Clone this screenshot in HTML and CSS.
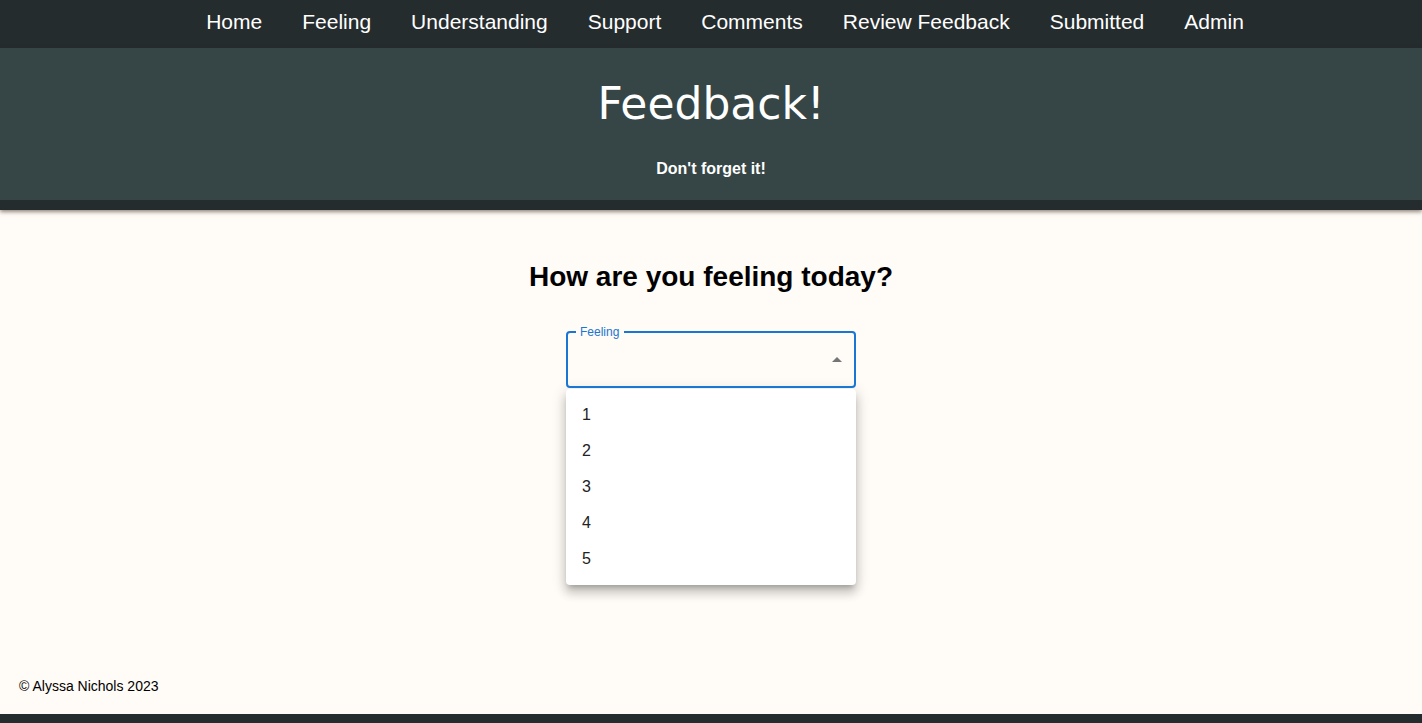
FILE: index.html
```html
<!DOCTYPE html>
<html lang="en">
<head>
<meta charset="utf-8">
<title>Feedback!</title>
<link rel="stylesheet" href="styles.css">
</head>
<body>
<div class="page">
  <nav class="nav">
    <a href="#">Home</a>
    <a href="#">Feeling</a>
    <a href="#">Understanding</a>
    <a href="#">Support</a>
    <a href="#">Comments</a>
    <a href="#">Review Feedback</a>
    <a href="#">Submitted</a>
    <a href="#">Admin</a>
  </nav>
  <header class="hero">
    <h1 class="hero-title">Feedback!</h1>
    <p class="hero-sub">Don't forget it!</p>
  </header>
  <main class="main">
    <h2 class="question">How are you feeling today?</h2>
    <div class="select-wrap">
      <fieldset class="select">
        <legend class="select-legend">Feeling</legend>
        <svg class="select-arrow" width="24" height="24" viewBox="0 0 24 24"><path d="M7 14l5-5 5 5z" fill="#757575"/></svg>
      </fieldset>
      <ul class="menu">
        <li class="menu-item">1</li>
        <li class="menu-item">2</li>
        <li class="menu-item">3</li>
        <li class="menu-item">4</li>
        <li class="menu-item">5</li>
      </ul>
    </div>
  </main>
  <footer class="footer">
    <p class="copy">© Alyssa Nichols 2023</p>
    <div class="footer-band"></div>
  </footer>
</div>
</body>
</html>
```

FILE: styles.css
```css
* { box-sizing: border-box; }
html, body { margin: 0; padding: 0; }
body {
  background: #fffbf6;
  font-family: "Liberation Sans", Arial, sans-serif;
  color: #000;
}
.page {
  min-height: 100vh;
  display: flex;
  flex-direction: column;
}
.nav {
  height: 48px;
  background: #252c2e;
  display: flex;
  justify-content: center;
  align-items: center;
  gap: 40px;
  padding-left: 28px;
  padding-bottom: 4px;
}
.nav a {
  color: #fff;
  text-decoration: none;
  font-size: 21px;
}
.hero {
  background: #364646;
  height: 162px;
  border-bottom: 10px solid #252c2e;
  box-shadow: 0 2px 4px rgba(60, 40, 30, 0.55);
  text-align: center;
  color: #fff;
  padding-top: 28px;
  position: relative;
  z-index: 1;
}
.hero-title {
  margin: 0;
  font-family: "DejaVu Sans", Verdana, sans-serif;
  font-weight: normal;
  font-size: 44px;
  line-height: 56px;
}
.hero-sub {
  margin: 27px 0 0;
  font-weight: bold;
  font-size: 16px;
  line-height: 20px;
}
.main {
  flex: 1;
  display: flex;
  flex-direction: column;
  align-items: center;
}
.question {
  margin: 51px 0 0;
  font-size: 28px;
  font-weight: bold;
  line-height: 32px;
}
.select-wrap {
  width: 290px;
  margin-top: 33px;
}
.select {
  margin: 0;
  height: 62px;
  border: 2px solid #1976d2;
  border-radius: 4px;
  padding: 0 7px;
  position: relative;
  min-width: 0;
}
.select-legend {
  font-size: 12px;
  color: #1976d2;
  padding: 0 5px 0 4px;
  line-height: 12px;
  margin-left: 1px;
}
.select-arrow {
  position: absolute;
  right: 5px;
  top: 10px;
}
.menu {
  list-style: none;
  margin: 1px 0 0;
  padding: 8px 0;
  background: #fff;
  border-radius: 4px;
  box-shadow: 0 5px 5px -3px rgba(0,0,0,0.2), 0 8px 10px 1px rgba(0,0,0,0.14), 0 3px 14px 2px rgba(0,0,0,0.12);
}
.menu-item {
  height: 36px;
  padding: 6px 16px;
  font-size: 16px;
  line-height: 24px;
  color: #222;
}
.footer {
  display: flex;
  flex-direction: column;
}
.copy {
  margin: 0 0 20px 19px;
  font-size: 14px;
  line-height: 16px;
}
.footer-band {
  height: 9px;
  background: #252c2e;
}
```
